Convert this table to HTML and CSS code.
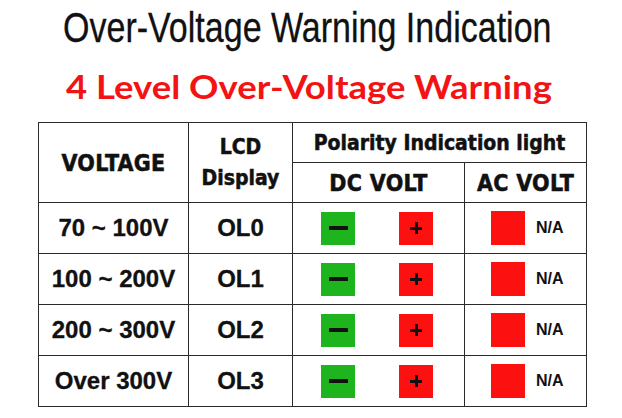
FILE: index.html
```html
<!DOCTYPE html>
<html>
<head>
<meta charset="utf-8">
<link rel="stylesheet" href="styles.css">
</head>
<body>
<div class="page">
  <h1 class="title"><span class="title-text">Over-Voltage Warning Indication</span></h1>
  <h2 class="subtitle"><span class="subtitle-text">4 Level Over-Voltage Warning</span></h2>
  <table class="grid">
    <colgroup>
      <col class="c-volt">
      <col class="c-lcd">
      <col class="c-dc">
      <col class="c-ac">
    </colgroup>
    <thead>
      <tr class="h-row">
        <th rowspan="2" class="hd caps">VOLTAGE</th>
        <th rowspan="2" class="hd lcd">LCD<br>Display</th>
        <th colspan="2" class="hd">Polarity Indication light</th>
      </tr>
      <tr class="h-row">
        <th class="hd caps">DC VOLT</th>
        <th class="hd caps">AC VOLT</th>
      </tr>
    </thead>
    <tbody>
      <tr class="d-row">
        <td class="val">70 ~ 100V</td>
        <td class="val">OL0</td>
        <td><div class="dc"><span class="sq green"><span class="minus"></span></span><span class="sq red"><span class="plus"></span></span></div></td>
        <td><div class="ac"><span class="sq red big"></span><span class="na">N/A</span></div></td>
      </tr>
      <tr class="d-row">
        <td class="val">100 ~ 200V</td>
        <td class="val">OL1</td>
        <td><div class="dc"><span class="sq green"><span class="minus"></span></span><span class="sq red"><span class="plus"></span></span></div></td>
        <td><div class="ac"><span class="sq red big"></span><span class="na">N/A</span></div></td>
      </tr>
      <tr class="d-row">
        <td class="val">200 ~ 300V</td>
        <td class="val">OL2</td>
        <td><div class="dc"><span class="sq green"><span class="minus"></span></span><span class="sq red"><span class="plus"></span></span></div></td>
        <td><div class="ac"><span class="sq red big"></span><span class="na">N/A</span></div></td>
      </tr>
      <tr class="d-row">
        <td class="val">Over 300V</td>
        <td class="val">OL3</td>
        <td><div class="dc"><span class="sq green"><span class="minus"></span></span><span class="sq red"><span class="plus"></span></span></div></td>
        <td><div class="ac"><span class="sq red big"></span><span class="na">N/A</span></div></td>
      </tr>
    </tbody>
  </table>
</div>
</body>
</html>
```
FILE: styles.css
```css
html, body {
  margin: 0;
  padding: 0;
  background: #ffffff;
}
.page {
  width: 622px;
  height: 418px;
  overflow: hidden;
}
.title {
  margin: 7px 0 0 0;
  padding-left: 63px;
  height: 42px;
  font-family: "Liberation Sans", Arial, sans-serif;
  font-weight: normal;
  font-size: 42px;
  line-height: 42px;
  color: #111;
  text-align: left;
  white-space: nowrap;
}
.title-text {
  display: inline-block;
  transform: scaleX(0.81);
  transform-origin: 0 50%;
  -webkit-text-stroke: 0.3px #111;
}
.subtitle {
  margin: 22px 0 0 0;
  padding-left: 66px;
  height: 32px;
  font-family: Lato, "Open Sans", sans-serif;
  font-weight: bold;
  font-size: 32px;
  line-height: 32px;
  color: #f21414;
  text-align: left;
  white-space: nowrap;
}
.subtitle-text {
  display: inline-block;
  transform: scaleX(1.14);
  transform-origin: 0 50%;
}
.grid {
  margin: 19px 0 0 38px;
  width: 548px;
  border-collapse: collapse;
  table-layout: fixed;
}
.c-volt { width: 150px; }
.c-lcd { width: 104px; }
.c-dc { width: 172px; }
.c-ac { width: 122px; }
.grid th, .grid td {
  border: 1px solid #2a2a2a;
  padding: 0;
  text-align: center;
  vertical-align: middle;
}
.h-row { height: 40px; }
.hd {
  font-family: "DejaVu Sans Condensed", "DejaVu Sans", sans-serif;
  font-weight: bold;
  font-size: 21px;
  color: #111;
  line-height: 26px;
  -webkit-text-stroke: 0.5px #111;
}
.caps {
  font-size: 23px;
  letter-spacing: 0.3px;
}
.lcd {
  line-height: 31px;
}
.d-row { height: 51px; }
.val {
  font-family: "Liberation Sans", Arial, sans-serif;
  font-weight: bold;
  font-size: 24px;
  color: #111;
  padding-top: 4px;
  -webkit-text-stroke: 0.3px #111;
}
.dc {
  display: flex;
  align-items: center;
  padding-left: 28px;
  gap: 44px;
}
.ac {
  display: flex;
  align-items: center;
  padding-left: 26px;
  gap: 11px;
}
.sq {
  width: 34px;
  height: 33px;
  display: flex;
  align-items: center;
  justify-content: center;
}
.big { height: 34px; }
.green { background: #1db41d; }
.red { background: #fc1010; }
.minus {
  width: 19px;
  height: 4px;
  background: #111;
}
.plus {
  width: 12px;
  height: 12px;
  background:
    linear-gradient(#111, #111) center / 12px 3px no-repeat,
    linear-gradient(#111, #111) center / 3px 12px no-repeat;
}
.na {
  font-family: "Liberation Sans", Arial, sans-serif;
  font-weight: bold;
  font-size: 16px;
  color: #111;
}
```
